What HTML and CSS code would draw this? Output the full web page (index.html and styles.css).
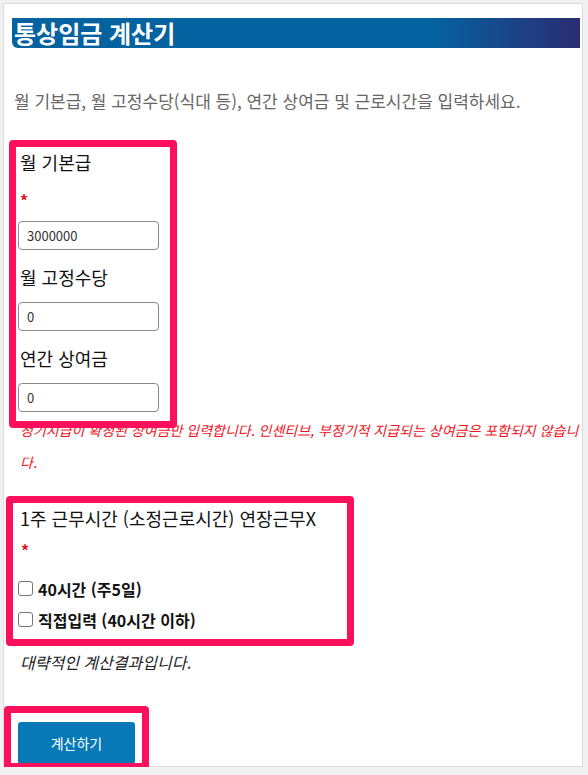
FILE: index.html
```html
<!DOCTYPE html>
<html lang="ko">
<head>
    <meta charset="UTF-8">
    <meta name="viewport" content="width=device-width, initial-scale=1.0">
    <title>통상임금 계산기</title>
    <link rel="stylesheet" href="styles.css">
</head>
<body>
    <div class="panel">
        <h1 class="title">통상임금 계산기</h1>
        <p class="intro">월 기본급, 월 고정수당(식대 등), 연간 상여금 및 근로시간을 입력하세요.</p>

        <!-- 급여 입력 -->
        <div class="pay-group marked marked-pay">
            <label class="field-label" for="basePay">월 기본급</label>
            <div class="required">*</div>
            <input class="field-input first-input" id="basePay" type="text" value="3000000">

            <label class="field-label" for="allowance">월 고정수당</label>
            <input class="field-input" id="allowance" type="text" value="0">

            <label class="field-label" for="bonus">연간 상여금</label>
            <input class="field-input" id="bonus" type="text" value="0">
        </div>
        <p class="note">정기지급이 확정된 상여금만 입력합니다. 인센티브, 부정기적 지급되는 상여금은 포함되지 않습니다.</p>

        <!-- 근무시간 -->
        <div class="hours-group marked marked-hours">
            <div class="field-label">1주 근무시간 (소정근로시간) 연장근무X</div>
            <div class="required">*</div>
            <label class="check-row first-row"><input type="checkbox" name="hours">40시간 (주5일)</label>
            <label class="check-row"><input type="checkbox" name="hours">직접입력 (40시간 이하)</label>
        </div>
        <p class="disclaimer">대략적인 계산결과입니다.</p>

        <div class="actions marked marked-button">
            <button type="button" class="calc-button">계산하기</button>
        </div>
    </div>
</body>
</html>
```

FILE: styles.css
```css
body {
    margin: 0;
    background-color: #f1f1f1;
    font-family: "Noto Sans CJK KR", "Noto Sans", sans-serif;
    color: #111;
}

.panel {
    margin: 3px 5px 0 3px;
    padding: 14px 2px 2px 8px;
    background-color: #ffffff;
    border: 1px solid #dcdcdc;
}

.title {
    margin: 0;
    height: 30px;
    padding-left: 2px;
    font-size: 24px;
    line-height: 30px;
    font-weight: bold;
    color: #ffffff;
    background: linear-gradient(to right, #0562a0 0%, #0562a0 74%, #2b2c72 100%);
    border-bottom-left-radius: 6px;
}

.intro {
    margin: 41px 0 0 2px;
    font-size: 17px;
    line-height: 24px;
    color: #666;
}

/* highlight frames drawn over the form */
.marked {
    position: relative;
}

.marked::after {
    content: "";
    position: absolute;
    border: 7px solid #fe0f5b;
    border-radius: 4px;
    pointer-events: none;
}

.marked-pay::after {
    top: -9px;
    left: -9px;
    right: -18px;
    bottom: -16px;
}

.marked-hours::after {
    top: -9px;
    left: -12px;
    right: 0;
    bottom: -11px;
}

.marked-button::after {
    top: -16px;
    left: -14px;
    right: -14px;
    bottom: -6px;
}

.pay-group {
    margin: 36px 0 0 6px;
    width: 141px;
}

.field-label {
    display: block;
    margin-top: 14px;
    padding-left: 2px;
    font-size: 18px;
    line-height: 26px;
    color: #111;
}

.pay-group .field-label:first-child,
.hours-group .field-label:first-child {
    margin-top: 0;
}

.required {
    padding: 10px 0 0 2px;
    font-size: 16px;
    line-height: 30px;
    font-weight: bold;
    color: #e8141c;
}

.field-input {
    display: block;
    box-sizing: border-box;
    width: 141px;
    height: 29px;
    margin-top: 12px;
    padding: 0 8px;
    border: 1px solid #8a8a8a;
    border-radius: 4px;
    font-family: inherit;
    font-size: 13px;
    color: #333;
}

.first-input {
    margin-top: 6px;
}

.note {
    margin: 2px 0 0 8px;
    font-size: 14px;
    line-height: 32px;
    font-style: italic;
    color: #f0141e;
}

.hours-group {
    margin: 27px 0 0 6px;
    width: 336px;
}

.hours-group .required {
    margin-top: 1px;
    padding: 6px 0 0 3px;
    line-height: 24px;
}

.check-row {
    display: flex;
    align-items: center;
    height: 31px;
    font-size: 16px;
    font-weight: bold;
    color: #111;
}

.first-row {
    margin-top: 11px;
}

.check-row input {
    appearance: none;
    box-sizing: border-box;
    width: 15px;
    height: 15px;
    margin: 0 5px 0 0;
    border: 1px solid #767676;
    border-radius: 3px;
    background-color: #ffffff;
}

.disclaimer {
    margin: 15px 0 0 8px;
    font-size: 16px;
    line-height: 24px;
    font-style: italic;
    color: #222;
}

.actions {
    display: flex;
    width: fit-content;
    margin: 48px 0 0 6px;
}

.calc-button {
    width: 117px;
    height: 42px;
    border: none;
    border-radius: 3px;
    background-color: #0779b6;
    color: #ffffff;
    font-family: inherit;
    font-size: 14px;
    cursor: pointer;
}
```
